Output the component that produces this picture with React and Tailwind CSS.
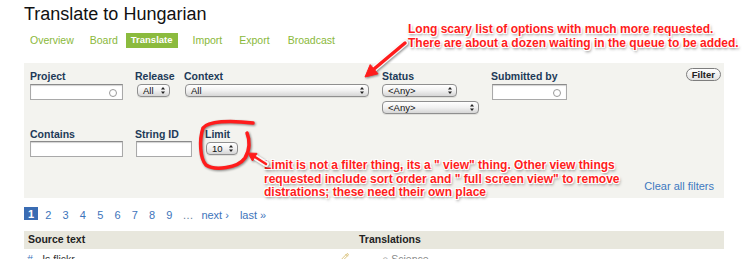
import { Pencil } from "lucide-react";

/* Translate page with Skitch-style annotations over the filter panel. */

function Arrows() {
  return (
    <svg width="12" height="9" viewBox="0 0 5 9" className="shrink-0">
      <path d="M2.5 1 L4.5 3.6 L0.5 3.6 Z" fill="#222" />
      <path d="M2.5 8 L4.5 5.4 L0.5 5.4 Z" fill="#222" />
    </svg>
  );
}

function Select({ w, label }) {
  return (
    <div className={`flex h-[13px] items-center justify-between rounded-[4px] border border-[#8f8f8f] bg-gradient-to-b from-white via-[#f1f1f1] to-[#d6d6d6] pl-[5px] text-[9.5px] leading-none text-[#111] shadow-[0_1px_0_rgba(0,0,0,0.08)] ${w}`}>
      <span>{label}</span>
      <Arrows />
    </div>
  );
}

function Input({ w, spinner }) {
  return (
    <div className={`relative h-[16px] border border-[#a9a9a9] border-t-[#8a8a8a] bg-white shadow-[inset_0_1px_1px_rgba(0,0,0,0.18)] ${w}`}>
      {spinner && <div className="absolute right-[5px] top-[3.5px] h-[8px] w-[8px] rounded-full border border-[#9a9a9a]" />}
    </div>
  );
}

function Label({ children }) {
  return <div className="h-[13px] text-[10.5px] font-bold leading-[13px] text-[#1d3a58]">{children}</div>;
}

const note = "font-bold text-[#ff1c1c] [text-shadow:-1px_-1px_0_#fff,1px_-1px_0_#fff,-1px_1px_0_#fff,1px_1px_0_#fff,0_0_2px_#fff,1px_2px_3px_rgba(0,0,0,0.55)]";

export default function App() {
  const pages = ["1", "2", "3", "4", "5", "6", "7", "8", "9"];
  return (
    <div className="relative h-[259px] w-[756px] overflow-hidden bg-white font-['Liberation_Sans',Arial,sans-serif]">
      <h1 className="ml-[24px] mt-[3px] text-[18px] font-normal leading-[22px] text-[#111]">Translate to Hungarian</h1>

      <div className="ml-[22px] mt-[8px] flex h-[15px] items-center text-[10.5px] text-[#8ab83a]">
        <span className="px-[8px]">Overview</span>
        <span className="px-[8px]">Board</span>
        <span className="mr-[7px] flex h-[15px] items-center bg-[#8bbb3e] px-[5px] text-[9.5px] font-bold text-white">Translate</span>
        <span className="px-[8px]">Import</span>
        <span className="px-[9px]">Export</span>
        <span className="px-[9px]">Broadcast</span>
      </div>

      <div className="ml-[24px] mt-[15px] flex h-[135px] w-[700px] flex-col bg-[#f3f3ef] pl-[6px] pt-[7px]">
        <div className="flex h-[58px]">
          <div className="w-[105px]">
            <Label>Project</Label>
            <div className="mt-[1px]"><Input w="w-[93px]" spinner /></div>
          </div>
          <div className="w-[49px]">
            <Label>Release</Label>
            <div className="mt-[1px] pl-[2px]"><Select w="w-[33px]" label="All" /></div>
          </div>
          <div className="w-[198px]">
            <Label>Context</Label>
            <div className="mt-[1px] pl-[1px]"><Select w="w-[184px]" label="All" /></div>
          </div>
          <div className="w-[109px]">
            <Label>Status</Label>
            <div className="mt-[1px] flex flex-col gap-[4px]">
              <Select w="w-[75px]" label="<Any>" />
              <Select w="w-[97px]" label="<Any>" />
            </div>
          </div>
          <div className="w-[120px]">
            <Label>Submitted by</Label>
            <div className="mt-[1px] pl-[1px]"><Input w="w-[75px]" spinner /></div>
          </div>
          <div className="ml-auto mr-[3px] mt-[-2px]">
            <div className="flex h-[13px] items-center rounded-full border border-[#7d7d7d] bg-gradient-to-b from-white to-[#e2e2e2] px-[5px] text-[9.5px] font-bold leading-none text-[#222]">Filter</div>
          </div>
        </div>

        <div className="flex">
          <div className="w-[105px]">
            <Label>Contains</Label>
            <Input w="w-[93px]" />
          </div>
          <div className="w-[70px]">
            <Label>String ID</Label>
            <div className="pl-[1px]"><Input w="w-[56px]" /></div>
          </div>
          <div>
            <Label>Limit</Label>
            <div className="mt-[1px] pl-[1px]"><Select w="w-[32px]" label="10" /></div>
          </div>
        </div>

        <div className="mr-[10px] mt-[22px] text-right text-[11px] leading-[14px] text-[#3d78c0]">Clear all filters</div>
      </div>

      <div className="ml-[24px] mt-[11px] flex h-[13px] items-center text-[11px] text-[#3d74bb]">
        <div className="flex gap-[3.3px]">
          {pages.map((p, i) => (
            <span key={p} className={i === 0 ? "flex h-[13px] w-[14px] items-center justify-center bg-[#3a6cb3] font-bold text-white" : "w-[14px] text-center"}>{p}</span>
          ))}
        </div>
        <span className="ml-[6px] text-[#6a7f9c]">…</span>
        <span className="ml-[8px]">next ›</span>
        <span className="ml-[11px]">last »</span>
      </div>

      <div className="ml-[24px] mt-[9px] flex h-[18px] w-[700px] items-center bg-[#e8e7dd] text-[10.5px] font-bold text-[#222]">
        <span className="w-[335px] pl-[4px]">Source text</span>
        <span>Translations</span>
      </div>
      <div className="ml-[24px] flex w-[700px] items-start pt-[3px] text-[10.5px] text-[#333]">
        <span className="w-[317px] pl-[3px]"><span className="text-[#3d74bb]">#</span> - Is flickr</span>
        <Pencil size={8} className="mt-[1px] text-[#c9a640]" />
        <span className="ml-[33px] text-[#888]">○ Science</span>
      </div>

      <div className={`absolute left-[408px] top-[22px] w-[340px] text-[12px] leading-[14px] ${note}`}>
        Long scary list of options with much more requested.<br />
        There are about a dozen waiting in the queue to be added.
      </div>
      <div className={`absolute left-[264px] top-[159px] w-[380px] text-[12px] leading-[13.5px] ${note}`}>
        Limit is not a filter thing, its a " view" thing. Other view things<br />
        requested include sort order and " full screen view" to remove<br />
        distrations; these need their own place
      </div>

      <svg className="pointer-events-none absolute left-0 top-0 drop-shadow-[1px_1px_1px_rgba(0,0,0,0.45)]" width="756" height="259">
        <g stroke="#fff" strokeWidth="6" fill="none" strokeLinecap="round" opacity="0.9">
          <path d="M405 43 L374 69" />
          <path d="M266 164 L255 157" />
        </g>
        <path d="M405 43 L374 69" stroke="#ff1c1c" strokeWidth="3.5" strokeLinecap="round" />
        <path d="M365 77 L378 73.8 L370.2 64.6 Z" fill="#ff1c1c" stroke="#ff1c1c" strokeWidth="1" strokeLinejoin="round" />
        <path d="M266 164 L255 157" stroke="#ff1c1c" strokeWidth="2.5" strokeLinecap="round" />
        <path d="M248 153 L257 153.4 L252.5 161 Z" fill="#ff1c1c" stroke="#ff1c1c" strokeWidth="1" strokeLinejoin="round" />
        <path d="M253 123 C230 120 208 121 203 128 C199 140 200 159 206 165 C215 171 238 168 245 158 C250 150 250 140 247 133" stroke="#ff1c1c" strokeWidth="3.5" fill="none" strokeLinecap="round" />
      </svg>
    </div>
  );
}
